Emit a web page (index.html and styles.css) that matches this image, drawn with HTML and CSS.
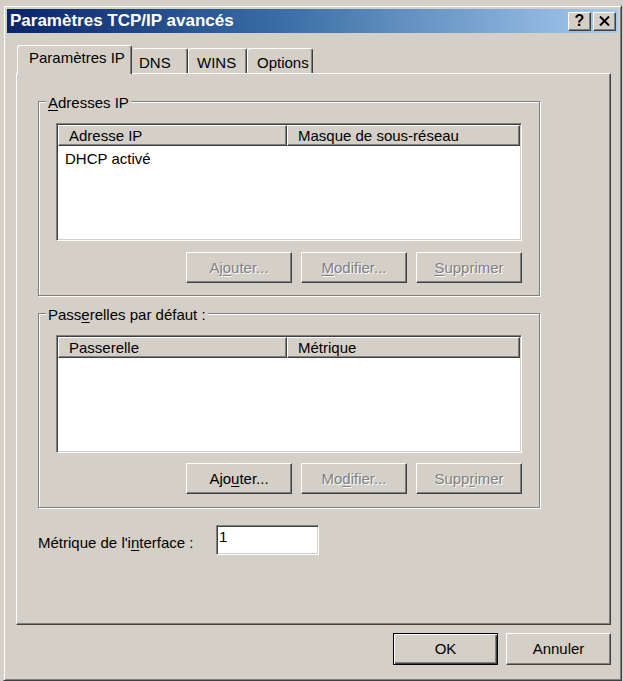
FILE: index.html
```html
<!DOCTYPE html>
<html lang="fr">
<head>
<meta charset="utf-8">
<title>Paramètres TCP/IP avancés</title>
<link rel="stylesheet" href="styles.css">
</head>
<body>
<div class="window">
  <div class="titlebar">
    <span class="title">Paramètres TCP/IP avancés</span>
    <div class="caption-btns">
      <div class="cbtn cbtn-help">?</div>
      <div class="cbtn cbtn-close">
        <svg width="11" height="10" viewBox="0 0 11 10"><path d="M1 0.5 L10 9.5 M10 0.5 L1 9.5" stroke="#000" stroke-width="2" fill="none"/></svg>
      </div>
    </div>
  </div>
  <div class="client">
    <div class="tabs">
      <div class="tab tab-sel tab-ip">Paramètres IP</div>
      <div class="tab tab-dns">DNS</div>
      <div class="tab tab-wins">WINS</div>
      <div class="tab tab-opt">Options</div>
    </div>
    <div class="panel">
      <div class="group">
        <div class="glabel"><u>A</u>dresses IP</div>
        <div class="list">
          <div class="lhead">
            <div class="hcol hcol-1">Adresse IP</div>
            <div class="hcol hcol-2">Masque de sous-réseau</div>
          </div>
          <div class="lrow">DHCP activé</div>
        </div>
        <div class="btnrow">
          <div class="btn btn-dis">Aj<u>o</u>uter...</div>
          <div class="btn btn-dis"><u>M</u>odifier...</div>
          <div class="btn btn-dis"><u>S</u>upprimer</div>
        </div>
      </div>
      <div class="group group-2">
        <div class="glabel">Pass<u>e</u>relles par défaut :</div>
        <div class="list">
          <div class="lhead">
            <div class="hcol hcol-1">Passerelle</div>
            <div class="hcol hcol-2">Métrique</div>
          </div>
        </div>
        <div class="btnrow btnrow-2">
          <div class="btn">Ajo<u>u</u>ter...</div>
          <div class="btn btn-dis">Mo<u>d</u>ifier...</div>
          <div class="btn btn-dis">Supp<u>r</u>imer</div>
        </div>
      </div>
      <div class="metric-row">
        <span class="metric-label">Métrique de l'i<u>n</u>terface :</span>
        <div class="edit">1</div>
      </div>
    </div>
    <div class="footer">
      <div class="btn btn-foot btn-default">OK</div>
      <div class="btn btn-foot">Annuler</div>
    </div>
  </div>
</div>
</body>
</html>
```
FILE: styles.css
```css
html, body {
  margin: 0;
  padding: 0;
  background: #d4d0c8;
}
body {
  font-family: "Liberation Sans", Arial, sans-serif;
  font-size: 15px;
  line-height: 18px;
  color: #000;
}
u { text-decoration: underline; text-underline-offset: 2px; }

.window {
  box-sizing: border-box;
  margin: 5px 0 0 3px;
  width: 619px;
  height: 676px;
  padding: 3px;
  background: #d4d0c8;
  border: 1px solid;
  border-color: #d4d0c8 #404040 #404040 #d4d0c8;
  box-shadow: inset 1px 1px #fff, inset -1px -1px #808080;
}

.titlebar {
  height: 24px;
  display: flex;
  align-items: center;
  justify-content: space-between;
  background: linear-gradient(to right, #0a246a 0%, #3a6ea5 45%, #a6caf0 100%);
}
.title {
  color: #fff;
  font-weight: bold;
  font-size: 17px;
  line-height: 24px;
  padding-left: 3px;
  white-space: nowrap;
}
.caption-btns {
  display: flex;
  gap: 2px;
  padding-right: 2px;
}
.cbtn {
  box-sizing: border-box;
  width: 23px;
  height: 19px;
  background: #d4d0c8;
  border: 1px solid;
  border-color: #fff #404040 #404040 #fff;
  box-shadow: inset -1px -1px #808080;
  display: flex;
  align-items: center;
  justify-content: center;
}
.cbtn-help {
  font-weight: bold;
  font-size: 16px;
  line-height: 16px;
}

.client {
  padding: 12px 7px 0 9px;
}

.tabs {
  display: flex;
  align-items: flex-end;
  height: 28px;
  padding-left: 1px;
}
.tab {
  box-sizing: border-box;
  height: 25px;
  padding-top: 5px;
  background: #d4d0c8;
  border: 1px solid;
  border-bottom: none;
  border-color: #fff #404040 transparent #fff;
  border-radius: 3px 3px 0 0;
  box-shadow: inset -1px 0 #808080;
  white-space: nowrap;
}
.tab-sel {
  position: relative;
  z-index: 2;
  height: 29px;
  margin-bottom: -1px;
  padding-top: 3px;
}
.tab-ip { width: 115px; padding-left: 11px; }
.tab-dns { width: 56px; padding-left: 6px; border-left-color: transparent; }
.tab-wins { width: 59px; padding-left: 8px; }
.tab-opt { width: 66px; padding-left: 9px; }

.panel {
  box-sizing: border-box;
  height: 552px;
  padding: 27px 0 0 21px;
  border: 1px solid;
  border-color: #fff #404040 #404040 #fff;
  box-shadow: inset -1px -1px #808080;
  position: relative;
  z-index: 1;
}

.group {
  position: relative;
  box-sizing: border-box;
  width: 502px;
  height: 195px;
  padding: 21px 0 0 17px;
  border: 1px solid #808080;
  box-shadow: inset 1px 1px #fff, 1px 1px #fff;
}
.group-2 {
  margin-top: 17px;
}
.glabel {
  position: absolute;
  top: -8px;
  left: 7px;
  padding: 0 2px;
  background: #d4d0c8;
  white-space: nowrap;
}

.list {
  box-sizing: border-box;
  width: 466px;
  height: 118px;
  background: #fff;
  border: 1px solid;
  border-color: #808080 #fff #fff #808080;
  box-shadow: inset 1px 1px #404040, inset -1px -1px #d4d0c8;
  padding: 1px;
}
.lhead {
  display: flex;
  height: 21px;
}
.hcol {
  box-sizing: border-box;
  height: 21px;
  padding: 1px 0 0 10px;
  background: #d4d0c8;
  border: 1px solid;
  border-color: #fff #404040 #404040 #fff;
  box-shadow: inset -1px -1px #808080;
  white-space: nowrap;
}
.hcol-1 { width: 229px; }
.hcol-2 { flex: 1; }
.lrow {
  padding: 4px 0 0 7px;
}

.btnrow {
  display: flex;
  justify-content: flex-end;
  gap: 9px;
  width: 466px;
  margin-top: 11px;
}
.btnrow-2 {
  margin-top: 10px;
}
.btn {
  box-sizing: border-box;
  width: 106px;
  height: 31px;
  background: #d4d0c8;
  border: 1px solid;
  border-color: #fff #404040 #404040 #fff;
  box-shadow: inset -1px -1px #808080;
  display: flex;
  align-items: center;
  justify-content: center;
  white-space: nowrap;
}
.btn-dis {
  color: #808080;
  text-shadow: 1px 1px #fff;
}

.metric-row {
  display: flex;
  align-items: flex-start;
  margin-top: 17px;
}
.metric-label {
  width: 178px;
  margin-top: 9px;
  white-space: nowrap;
}
.edit {
  box-sizing: border-box;
  width: 103px;
  height: 30px;
  padding: 2px 0 0 2px;
  background: #fff;
  border: 1px solid;
  border-color: #808080 #fff #fff #808080;
  box-shadow: inset 1px 1px #404040, inset -1px -1px #d4d0c8;
}

.footer {
  display: flex;
  justify-content: flex-end;
  gap: 8px;
  margin-top: 8px;
}
.btn-foot {
  width: 105px;
  height: 32px;
}
.btn-default {
  border-color: #000;
  box-shadow: inset 1px 1px #fff, inset -1px -1px #404040, inset -2px -2px #808080;
}
```
